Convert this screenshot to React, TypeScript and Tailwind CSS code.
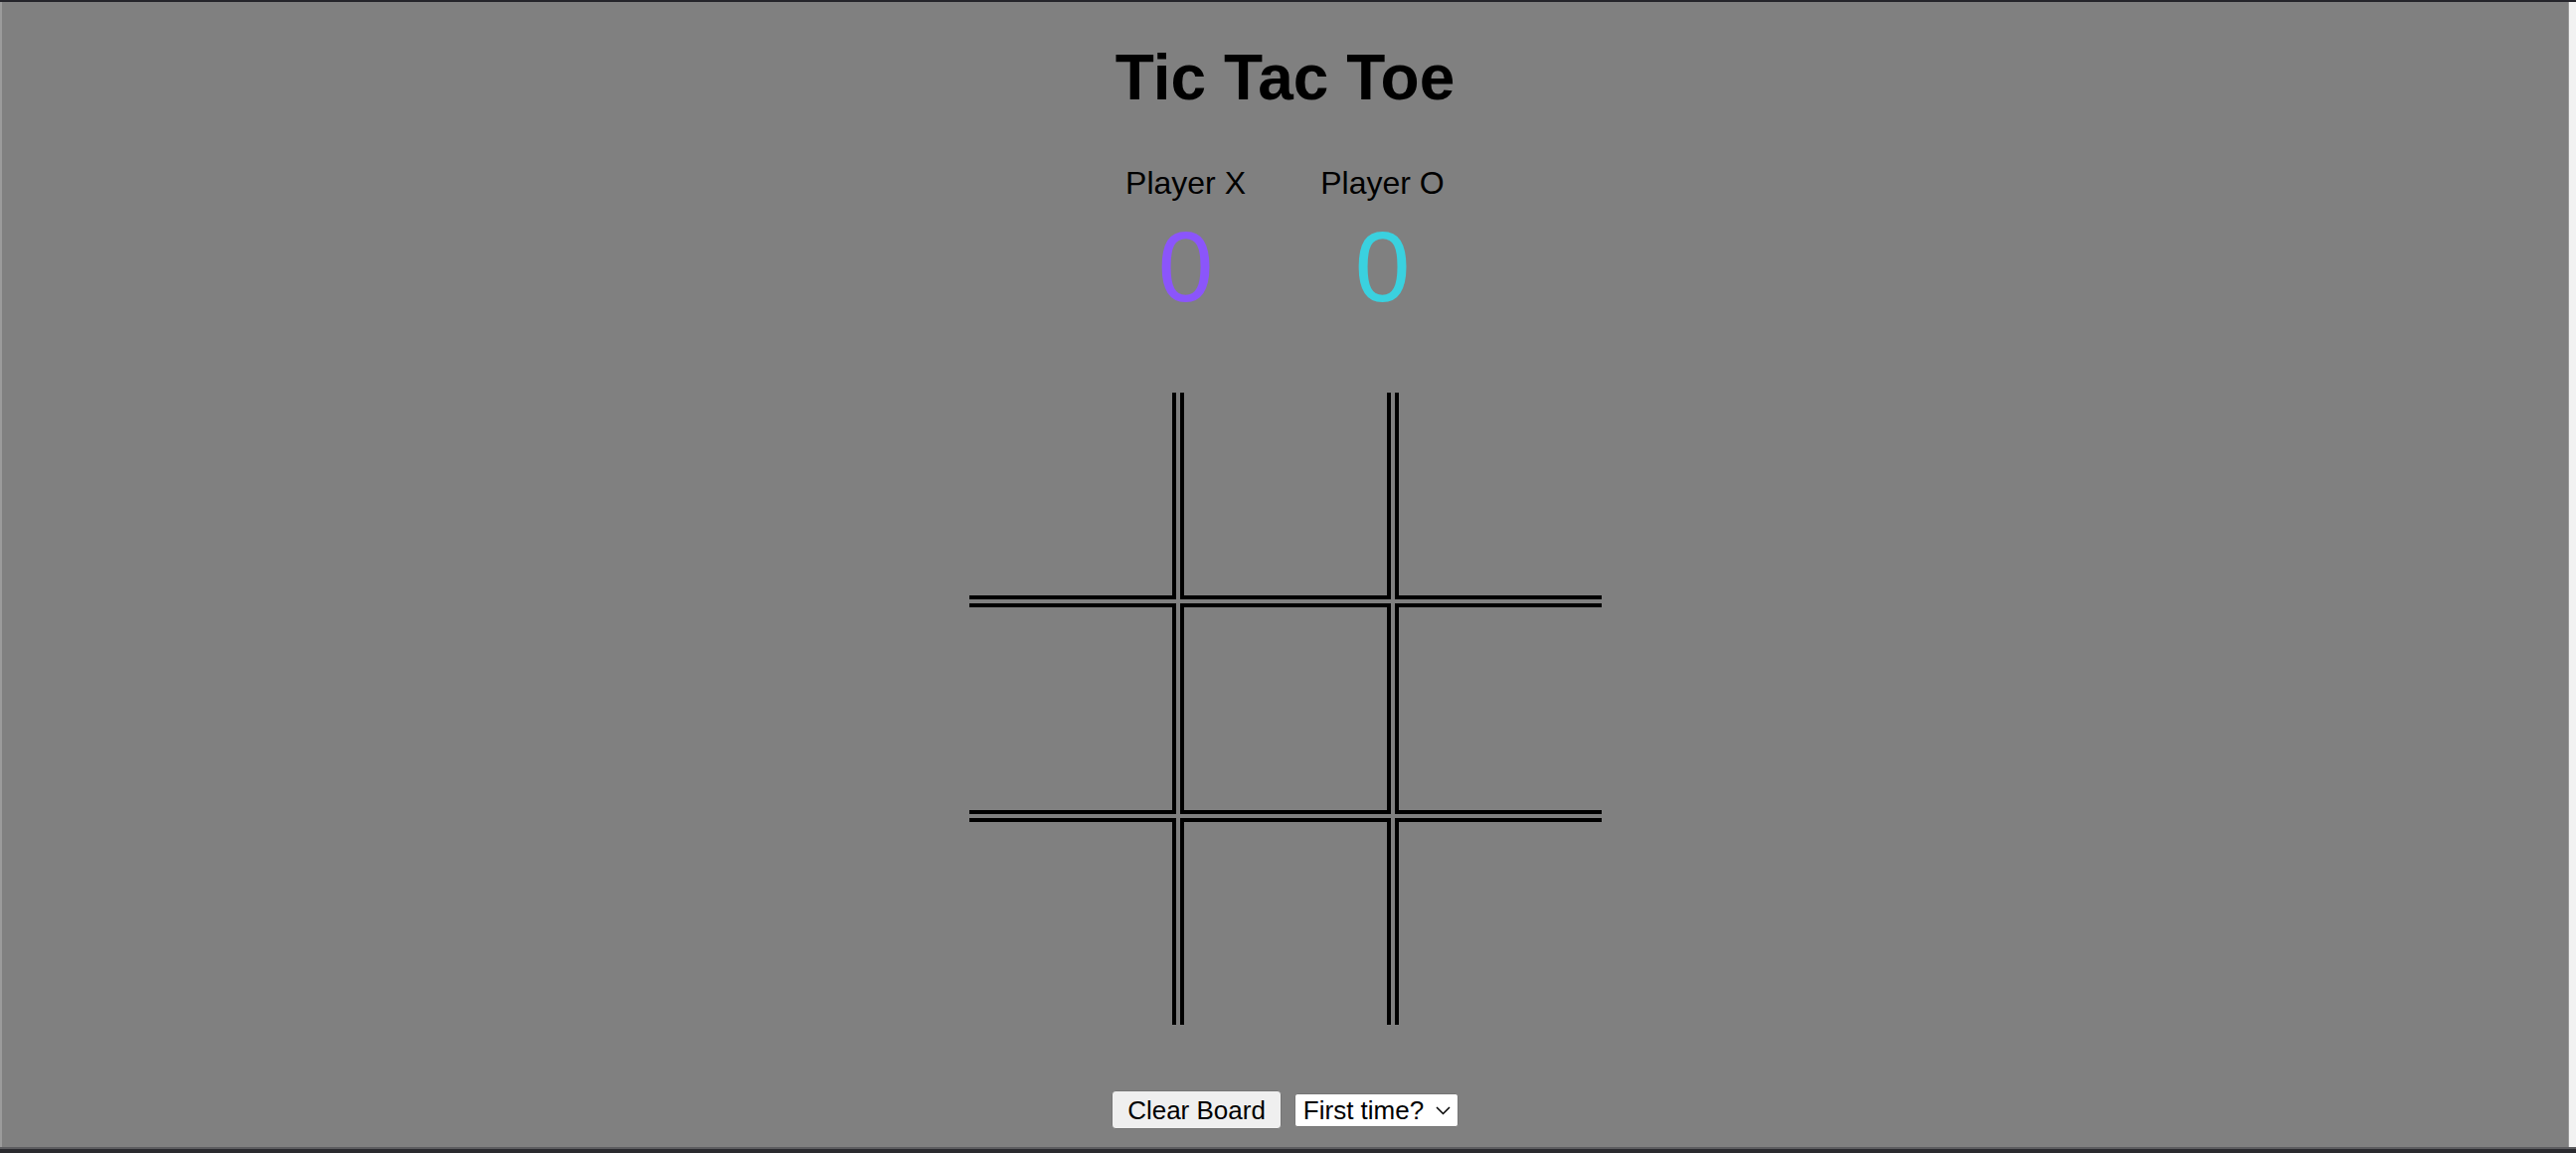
import { useState } from 'react'

const cellBorders = [
  'border-r-4 border-b-4',
  'border-l-4 border-r-4 border-b-4',
  'border-l-4 border-b-4',
  'border-t-4 border-r-4 border-b-4',
  'border-4',
  'border-t-4 border-l-4 border-b-4',
  'border-t-4 border-r-4',
  'border-t-4 border-l-4 border-r-4',
  'border-t-4 border-l-4',
]

const lines = [
  [0, 1, 2], [3, 4, 5], [6, 7, 8],
  [0, 3, 6], [1, 4, 7], [2, 5, 8],
  [0, 4, 8], [2, 4, 6],
]

function winnerOf(board: string[]) {
  for (const [a, b, c] of lines) {
    if (board[a] && board[a] === board[b] && board[a] === board[c]) return board[a]
  }
  return null
}

export default function App() {
  const [board, setBoard] = useState<string[]>(Array(9).fill(''))
  const [turn, setTurn] = useState<'X' | 'O'>('X')
  const [score, setScore] = useState({ X: 0, O: 0 })

  const play = (i: number) => {
    if (board[i] || winnerOf(board)) return
    const next = [...board]
    next[i] = turn
    setBoard(next)
    const w = winnerOf(next)
    if (w) setScore((s) => ({ ...s, [w]: s[w as 'X' | 'O'] + 1 }))
    setTurn(turn === 'X' ? 'O' : 'X')
  }

  const clear = () => {
    setBoard(Array(9).fill(''))
    setTurn('X')
  }

  return (
    <div className="h-[1160px] w-full flex flex-col bg-[#808080] font-['Liberation_Sans',Arial,sans-serif] text-black">
      <div className="h-[2px] bg-[#25252b]" />
      <div className="flex flex-1 min-h-0">
        <div className="w-[2px] bg-[#9b9b9b]" />
        <main className="flex-1 flex flex-col items-center">
          <h1 className="mt-[44px] text-[64px] leading-[64px] font-bold">Tic Tac Toe</h1>

          <div className="mt-[58px] flex gap-[48px] -ml-[2px]">
            <div className="w-[150px] flex flex-col items-center">
              <span className="text-[32px] leading-[32px]">Player X</span>
              <span className="mt-[18px] text-[100px] leading-[100px] text-[#8b55fb]">{score.X}</span>
            </div>
            <div className="w-[150px] flex flex-col items-center">
              <span className="text-[32px] leading-[32px]">Player O</span>
              <span className="mt-[18px] text-[100px] leading-[100px] text-[#3ad1df]">{score.O}</span>
            </div>
          </div>

          <div className="mt-[77px] grid grid-cols-[208px_212px_208px] grid-rows-[208px_212px_208px] gap-[4px]">
            {board.map((v, i) => (
              <button
                key={i}
                onClick={() => play(i)}
                className={`${cellBorders[i]} border-black flex items-center justify-center text-[120px] leading-none ${v === 'X' ? 'text-[#8b55fb]' : 'text-[#3ad1df]'}`}
              >
                {v}
              </button>
            ))}
          </div>

          <div className="mt-[66px] flex items-center gap-[13px]">
            <button
              onClick={clear}
              className="h-[39px] px-[15px] bg-[#efefef] border border-[#767676] rounded-[4px] text-[26px] leading-none"
            >
              Clear Board
            </button>
            <div className="relative">
              <select className="appearance-none h-[34px] w-[165px] pl-[8px] bg-white border border-[#767676] rounded-[3px] text-[26px] leading-none">
                <option>First time?</option>
                <option>Player X first</option>
                <option>Player O first</option>
              </select>
              <svg
                className="absolute right-[8px] top-[13px] pointer-events-none"
                width="15"
                height="9"
                viewBox="0 0 15 9"
                fill="none"
                stroke="black"
                strokeWidth="1.5"
              >
                <path d="M1 1l6.5 6.5L14 1" />
              </svg>
            </div>
          </div>
        </main>
        <div className="w-[8px] bg-[#f2f2f2] border-l border-[#9a9a9a]" />
      </div>
      <div className="h-[6px] bg-[#2a2a2f] border-t-2 border-[#5c5c5f]" />
    </div>
  )
}
